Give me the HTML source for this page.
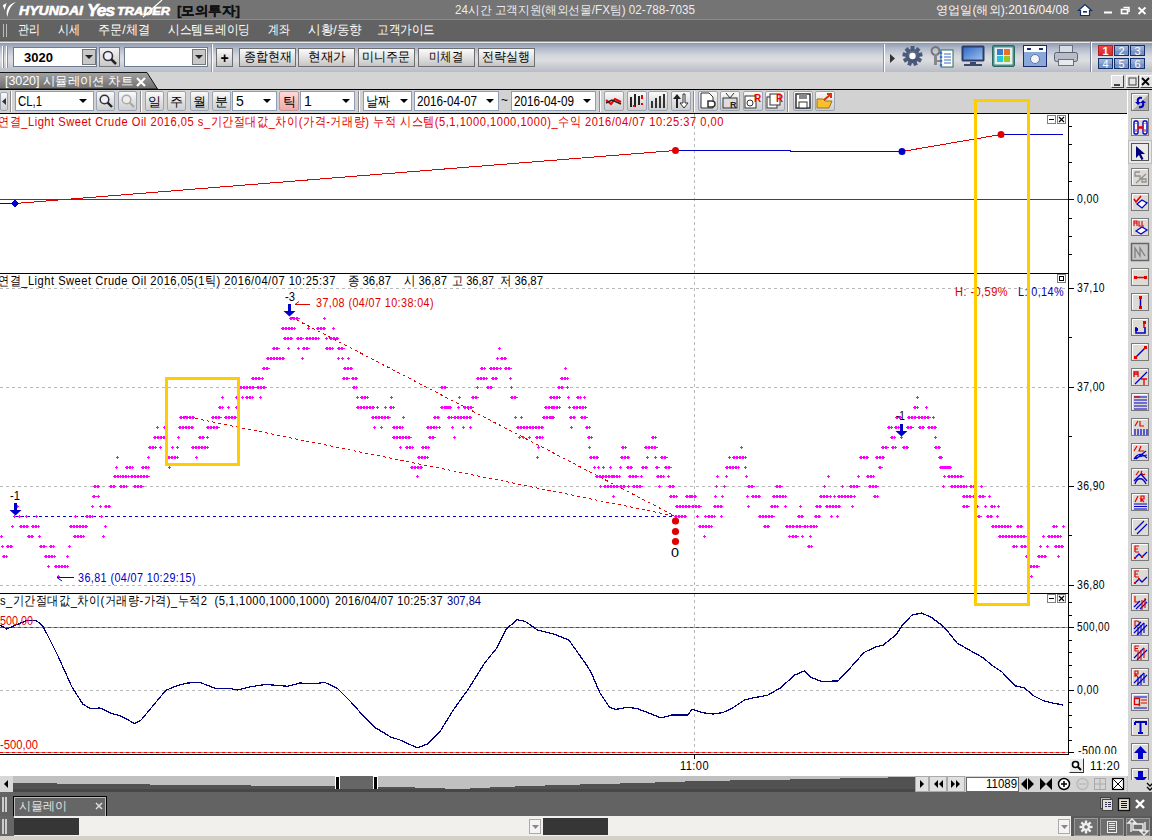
<!DOCTYPE html><html><head><meta charset="utf-8"><style>
*{box-sizing:border-box}
html,body{margin:0;padding:0;width:1152px;height:840px;overflow:hidden;background:#d4d4d4;font-family:"Liberation Sans",sans-serif;font-size:12px}
.ab{position:absolute}
.t{position:absolute;white-space:nowrap;line-height:1}
.f{display:inline-block}
</style></head><body>
<div class="ab" style="left:0;top:0;width:1152px;height:19px;background:#747474"></div>
<div class="ab" style="left:0;top:19px;width:1152px;height:1px;background:#8c8c8c"></div>
<div class="ab" style="left:0;top:20px;width:1152px;height:22px;background:#636262"></div>
<div class="ab" style="left:0;top:40px;width:1152px;height:1px;background:#5a5a5a"></div><div class="ab" style="left:0;top:41px;width:1152px;height:1px;background:#9a9a9a"></div><div class="ab" style="left:0;top:42px;width:1152px;height:1px;background:#e8e8e8"></div>
<div class="ab" style="left:0;top:43px;width:1152px;height:29px;background:linear-gradient(#8c9ab0,#b4bccb 20%,#d6d8de 45%,#dcdde0 60%,#b8bcc7)"></div>
<div class="ab" style="left:0;top:72px;width:1152px;height:17px;background:#d4d4d4"></div>
<div class="ab" style="left:0;top:89px;width:1152px;height:1px;background:#000"></div>
<div class="ab" style="left:0;top:90px;width:1128px;height:23px;background:#d2d2d2"></div>
<div class="ab" style="left:0;top:113px;width:1128px;height:663px;background:#fff"></div>
<div class="ab" style="left:1127px;top:90px;width:1px;height:702px;background:#fff"></div>
<div class="ab" style="left:1128px;top:90px;width:24px;height:702px;background:#d6d6d6"></div>
<div class="ab" style="left:0;top:776px;width:1128px;height:16px;background:#c0c0c0"></div>
<div class="ab" style="left:0;top:792px;width:1152px;height:24px;background:#636363"></div>
<div class="ab" style="left:0;top:816px;width:1152px;height:20px;background:#f2f0ec"></div>
<div class="ab" style="left:0;top:836px;width:1152px;height:4px;background:#d4d0c8"></div>
<svg width='1152' height='840' style='position:absolute;left:0;top:0' shape-rendering='crispEdges'><line x1="0" y1="288.5" x2="1068" y2="288.5" stroke="#b8b8b8" stroke-dasharray="3,3"/><line x1="0" y1="387.5" x2="1068" y2="387.5" stroke="#b8b8b8" stroke-dasharray="3,3"/><line x1="0" y1="486.5" x2="1068" y2="486.5" stroke="#b8b8b8" stroke-dasharray="3,3"/><line x1="0" y1="585.5" x2="1068" y2="585.5" stroke="#b8b8b8" stroke-dasharray="3,3"/><line x1="0" y1="690.5" x2="1068" y2="690.5" stroke="#b8b8b8" stroke-dasharray="3,3"/><line x1="694.5" y1="114" x2="694.5" y2="754" stroke="#b8b8b8" stroke-dasharray="3,3"/><line x1="0" y1="199.5" x2="1068" y2="199.5" stroke="#e00000"/><polyline points="0,203.5 15,203.5" fill="none" stroke="#0000c8" stroke-width="1"/><polyline points="15,203.5 675,150.5" fill="none" stroke="#e00000" stroke-width="1"/><polyline points="675,150.5 790,150.5 790,151.5 902,151.5" fill="none" stroke="#0000c8"/><polyline points="902,151.5 1001,134.5" fill="none" stroke="#e00000"/><polyline points="1001,134.5 1063,134.5" fill="none" stroke="#0000c8"/><polygon points="15,199 19,203.5 15,208 11,203.5" fill="#0000c8"/><circle cx="675.5" cy="150.5" r="3.5" fill="#e00000" shape-rendering="auto"/><circle cx="902" cy="151.5" r="3.5" fill="#0000c8" shape-rendering="auto"/><circle cx="1001" cy="134.5" r="3.5" fill="#e00000" shape-rendering="auto"/><line x1="0" y1="627.5" x2="1068" y2="627.5" stroke="#a89090"/><line x1="0" y1="627.5" x2="1068" y2="627.5" stroke="#ff0000" stroke-dasharray="3,3"/><line x1="0" y1="752.5" x2="1068" y2="752.5" stroke="#a89090"/><line x1="0" y1="752.5" x2="1068" y2="752.5" stroke="#ff0000" stroke-dasharray="3,3"/><line x1="15" y1="516.5" x2="675" y2="516.5" stroke="#0000d0" stroke-dasharray="3,3"/><polyline points="291,317 675,516" fill="none" stroke="#e00000" stroke-dasharray="3,3"/><polyline points="183,416 675,516" fill="none" stroke="#e00000" stroke-dasharray="3,3"/><path d="M116 457h3v1h-3zM117 456h1v3h-1zM147 457h3v1h-3zM148 456h1v3h-1zM167 457h12v1h-12zM168 456h2v3h-2zM171 456h2v3h-2zM174 456h2v3h-2zM177 456h1v3h-1zM195 457h3v1h-3zM196 456h1v3h-1zM417 457h12v1h-12zM418 456h2v3h-2zM421 456h2v3h-2zM424 456h2v3h-2zM427 456h1v3h-1zM536 457h3v1h-3zM537 456h1v3h-1zM589 457h10v1h-10zM590 456h2v3h-2zM593 456h2v3h-2zM596 456h2v3h-2zM620 457h10v1h-10zM621 456h2v3h-2zM624 456h2v3h-2zM627 456h2v3h-2zM646 457h3v1h-3zM647 456h1v3h-1zM654 457h3v1h-3zM655 456h1v3h-1zM660 457h8v1h-8zM661 456h2v3h-2zM664 456h2v3h-2zM728 457h3v1h-3zM729 456h1v3h-1zM732 457h15v1h-15zM733 456h2v3h-2zM736 456h2v3h-2zM739 456h2v3h-2zM742 456h2v3h-2zM745 456h1v3h-1zM859 457h10v1h-10zM860 456h2v3h-2zM863 456h2v3h-2zM866 456h2v3h-2zM875 457h10v1h-10zM876 456h2v3h-2zM879 456h2v3h-2zM882 456h2v3h-2zM938 457h3v1h-3zM939 456h1v3h-1zM939 457h4v1h-4zM940 456h2v3h-2zM115 467h3v1h-3zM116 466h1v3h-1zM125 467h9v1h-9zM126 466h2v3h-2zM129 466h2v3h-2zM132 466h1v3h-1zM141 467h9v1h-9zM142 466h2v3h-2zM145 466h2v3h-2zM148 466h1v3h-1zM168 467h3v1h-3zM169 466h1v3h-1zM410 467h13v1h-13zM411 466h2v3h-2zM414 466h2v3h-2zM417 466h2v3h-2zM420 466h2v3h-2zM593 467h3v1h-3zM594 466h1v3h-1zM597 467h3v1h-3zM598 466h1v3h-1zM602 467h3v1h-3zM603 466h1v3h-1zM609 467h3v1h-3zM610 466h1v3h-1zM619 467h3v1h-3zM620 466h1v3h-1zM626 467h7v1h-7zM627 466h2v3h-2zM630 466h2v3h-2zM641 467h7v1h-7zM642 466h2v3h-2zM645 466h2v3h-2zM655 467h5v1h-5zM656 466h2v3h-2zM664 467h8v1h-8zM665 466h2v3h-2zM668 466h2v3h-2zM725 467h15v1h-15zM726 466h2v3h-2zM729 466h2v3h-2zM732 466h2v3h-2zM735 466h2v3h-2zM738 466h1v3h-1zM744 467h3v1h-3zM745 466h1v3h-1zM878 467h5v1h-5zM879 466h2v3h-2zM939 467h13v1h-13zM940 466h2v3h-2zM943 466h2v3h-2zM946 466h2v3h-2zM949 466h2v3h-2zM940 467h11v1h-11zM941 466h2v3h-2zM944 466h2v3h-2zM947 466h2v3h-2zM113 476h9v1h-9zM114 475h2v3h-2zM117 475h2v3h-2zM120 475h1v3h-1zM121 476h9v1h-9zM122 475h2v3h-2zM125 475h2v3h-2zM128 475h1v3h-1zM130 476h20v1h-20zM131 475h2v3h-2zM134 475h2v3h-2zM137 475h2v3h-2zM140 475h2v3h-2zM143 475h2v3h-2zM146 475h2v3h-2zM416 476h3v1h-3zM417 475h1v3h-1zM595 476h19v1h-19zM596 475h2v3h-2zM599 475h2v3h-2zM602 475h2v3h-2zM605 475h2v3h-2zM608 475h2v3h-2zM611 475h2v3h-2zM612 476h9v1h-9zM613 475h2v3h-2zM616 475h2v3h-2zM619 475h1v3h-1zM628 476h11v1h-11zM629 475h2v3h-2zM632 475h2v3h-2zM635 475h2v3h-2zM640 476h3v1h-3zM641 475h1v3h-1zM656 476h9v1h-9zM657 475h2v3h-2zM660 475h2v3h-2zM663 475h1v3h-1zM667 476h3v1h-3zM668 475h1v3h-1zM716 476h3v1h-3zM717 475h1v3h-1zM725 476h3v1h-3zM726 475h1v3h-1zM745 476h3v1h-3zM746 475h1v3h-1zM827 476h3v1h-3zM828 475h1v3h-1zM857 476h3v1h-3zM858 475h1v3h-1zM866 476h9v1h-9zM867 475h2v3h-2zM870 475h2v3h-2zM873 475h1v3h-1zM943 476h3v1h-3zM944 475h1v3h-1zM948 476h3v1h-3zM949 475h1v3h-1zM947 476h17v1h-17zM948 475h2v3h-2zM951 475h2v3h-2zM954 475h2v3h-2zM957 475h2v3h-2zM960 475h2v3h-2zM93 486h7v1h-7zM94 485h2v3h-2zM97 485h2v3h-2zM109 486h7v1h-7zM110 485h2v3h-2zM113 485h2v3h-2zM119 486h9v1h-9zM120 485h2v3h-2zM123 485h2v3h-2zM126 485h1v3h-1zM133 486h11v1h-11zM134 485h2v3h-2zM137 485h2v3h-2zM140 485h2v3h-2zM599 486h3v1h-3zM600 485h1v3h-1zM603 486h16v1h-16zM604 485h2v3h-2zM607 485h2v3h-2zM610 485h2v3h-2zM613 485h2v3h-2zM616 485h2v3h-2zM619 486h7v1h-7zM620 485h2v3h-2zM623 485h2v3h-2zM627 486h3v1h-3zM628 485h1v3h-1zM632 486h11v1h-11zM633 485h2v3h-2zM636 485h2v3h-2zM639 485h2v3h-2zM658 486h3v1h-3zM659 485h1v3h-1zM668 486h7v1h-7zM669 485h2v3h-2zM672 485h2v3h-2zM715 486h3v1h-3zM716 485h1v3h-1zM723 486h3v1h-3zM724 485h1v3h-1zM747 486h8v1h-8zM748 485h2v3h-2zM751 485h2v3h-2zM775 486h8v1h-8zM776 485h2v3h-2zM779 485h2v3h-2zM823 486h3v1h-3zM824 485h1v3h-1zM841 486h3v1h-3zM842 485h1v3h-1zM849 486h11v1h-11zM850 485h2v3h-2zM853 485h2v3h-2zM856 485h2v3h-2zM868 486h11v1h-11zM869 485h2v3h-2zM872 485h2v3h-2zM875 485h2v3h-2zM942 486h3v1h-3zM943 485h1v3h-1zM950 486h18v1h-18zM951 485h2v3h-2zM954 485h2v3h-2zM957 485h2v3h-2zM960 485h2v3h-2zM963 485h2v3h-2zM966 485h1v3h-1zM969 486h8v1h-8zM970 485h2v3h-2zM973 485h2v3h-2zM980 486h3v1h-3zM981 485h1v3h-1zM92 496h5v1h-5zM93 495h2v3h-2zM97 496h3v1h-3zM98 495h1v3h-1zM612 496h3v1h-3zM613 495h1v3h-1zM669 496h9v1h-9zM670 495h2v3h-2zM673 495h2v3h-2zM676 495h1v3h-1zM685 496h7v1h-7zM686 495h2v3h-2zM689 495h2v3h-2zM690 496h7v1h-7zM691 495h2v3h-2zM694 495h2v3h-2zM714 496h3v1h-3zM715 495h1v3h-1zM721 496h3v1h-3zM722 495h1v3h-1zM746 496h3v1h-3zM747 495h1v3h-1zM751 496h10v1h-10zM752 495h2v3h-2zM755 495h2v3h-2zM758 495h2v3h-2zM772 496h15v1h-15zM773 495h2v3h-2zM776 495h2v3h-2zM779 495h2v3h-2zM782 495h2v3h-2zM785 495h1v3h-1zM819 496h11v1h-11zM820 495h2v3h-2zM823 495h2v3h-2zM826 495h2v3h-2zM829 496h3v1h-3zM830 495h1v3h-1zM833 496h3v1h-3zM834 495h1v3h-1zM837 496h16v1h-16zM838 495h2v3h-2zM841 495h2v3h-2zM844 495h2v3h-2zM847 495h2v3h-2zM850 495h2v3h-2zM853 496h3v1h-3zM854 495h1v3h-1zM873 496h6v1h-6zM874 495h2v3h-2zM877 495h1v3h-1zM962 496h10v1h-10zM963 495h2v3h-2zM966 495h2v3h-2zM969 495h2v3h-2zM972 496h3v1h-3zM973 495h1v3h-1zM978 496h8v1h-8zM979 495h2v3h-2zM982 495h2v3h-2zM988 496h3v1h-3zM989 495h1v3h-1zM91 506h3v1h-3zM92 505h1v3h-1zM99 506h3v1h-3zM100 505h1v3h-1zM104 506h7v1h-7zM105 505h2v3h-2zM108 505h2v3h-2zM16 506h3v1h-3zM17 505h1v3h-1zM675 506h17v1h-17zM676 505h2v3h-2zM679 505h2v3h-2zM682 505h2v3h-2zM685 505h2v3h-2zM688 505h2v3h-2zM691 506h11v1h-11zM692 505h2v3h-2zM695 505h2v3h-2zM698 505h2v3h-2zM713 506h10v1h-10zM714 505h2v3h-2zM717 505h2v3h-2zM720 505h2v3h-2zM747 506h3v1h-3zM748 505h1v3h-1zM770 506h9v1h-9zM771 505h2v3h-2zM774 505h2v3h-2zM777 505h1v3h-1zM784 506h3v1h-3zM785 505h1v3h-1zM799 506h3v1h-3zM800 505h1v3h-1zM815 506h7v1h-7zM816 505h2v3h-2zM819 505h2v3h-2zM825 506h16v1h-16zM826 505h2v3h-2zM829 505h2v3h-2zM832 505h2v3h-2zM835 505h2v3h-2zM838 505h2v3h-2zM851 506h3v1h-3zM852 505h1v3h-1zM962 506h8v1h-8zM963 505h2v3h-2zM966 505h2v3h-2zM976 506h3v1h-3zM977 505h1v3h-1zM984 506h3v1h-3zM985 505h1v3h-1zM990 506h6v1h-6zM991 505h2v3h-2zM994 505h1v3h-1zM997 506h3v1h-3zM998 505h1v3h-1zM13 516h3v1h-3zM14 515h1v3h-1zM18 516h3v1h-3zM19 515h1v3h-1zM25 516h3v1h-3zM26 515h1v3h-1zM35 516h3v1h-3zM36 515h1v3h-1zM74 516h3v1h-3zM75 515h1v3h-1zM85 516h9v1h-9zM86 515h2v3h-2zM89 515h2v3h-2zM92 515h1v3h-1zM100 516h3v1h-3zM101 515h1v3h-1zM674 516h13v1h-13zM675 515h2v3h-2zM678 515h2v3h-2zM681 515h2v3h-2zM684 515h2v3h-2zM696 516h3v1h-3zM697 515h1v3h-1zM704 516h3v1h-3zM705 515h1v3h-1zM707 516h9v1h-9zM708 515h2v3h-2zM711 515h2v3h-2zM714 515h1v3h-1zM720 516h3v1h-3zM721 515h1v3h-1zM758 516h17v1h-17zM759 515h2v3h-2zM762 515h2v3h-2zM765 515h2v3h-2zM768 515h2v3h-2zM771 515h2v3h-2zM797 516h7v1h-7zM798 515h2v3h-2zM801 515h2v3h-2zM814 516h7v1h-7zM815 515h2v3h-2zM818 515h2v3h-2zM830 516h3v1h-3zM831 515h1v3h-1zM836 516h3v1h-3zM837 515h1v3h-1zM977 516h5v1h-5zM978 515h2v3h-2zM986 516h7v1h-7zM987 515h2v3h-2zM990 515h2v3h-2zM996 516h3v1h-3zM997 515h1v3h-1zM11 526h3v1h-3zM12 525h1v3h-1zM19 526h10v1h-10zM20 525h2v3h-2zM23 525h2v3h-2zM26 525h2v3h-2zM31 526h9v1h-9zM32 525h2v3h-2zM35 525h2v3h-2zM38 525h1v3h-1zM69 526h19v1h-19zM70 525h2v3h-2zM73 525h2v3h-2zM76 525h2v3h-2zM79 525h2v3h-2zM82 525h2v3h-2zM85 525h2v3h-2zM104 526h3v1h-3zM105 525h1v3h-1zM698 526h15v1h-15zM699 525h2v3h-2zM702 525h2v3h-2zM705 525h2v3h-2zM708 525h2v3h-2zM711 525h1v3h-1zM763 526h7v1h-7zM764 525h2v3h-2zM767 525h2v3h-2zM785 526h11v1h-11zM786 525h2v3h-2zM789 525h2v3h-2zM792 525h2v3h-2zM795 526h8v1h-8zM796 525h2v3h-2zM799 525h2v3h-2zM803 526h6v1h-6zM804 525h2v3h-2zM807 525h1v3h-1zM809 526h9v1h-9zM810 525h2v3h-2zM813 525h2v3h-2zM816 525h1v3h-1zM991 526h21v1h-21zM992 525h2v3h-2zM995 525h2v3h-2zM998 525h2v3h-2zM1001 525h2v3h-2zM1004 525h2v3h-2zM1007 525h2v3h-2zM1010 525h1v3h-1zM1016 526h7v1h-7zM1017 525h2v3h-2zM1020 525h2v3h-2zM1052 526h6v1h-6zM1053 525h2v3h-2zM1056 525h1v3h-1zM1062 526h3v1h-3zM1063 525h1v3h-1zM0 536h3v1h-3zM1 535h1v3h-1zM27 536h7v1h-7zM28 535h2v3h-2zM31 535h2v3h-2zM38 536h3v1h-3zM39 535h1v3h-1zM73 536h12v1h-12zM74 535h2v3h-2zM77 535h2v3h-2zM80 535h2v3h-2zM83 535h1v3h-1zM102 536h3v1h-3zM103 535h1v3h-1zM703 536h3v1h-3zM704 535h1v3h-1zM788 536h3v1h-3zM789 535h1v3h-1zM791 536h8v1h-8zM792 535h2v3h-2zM795 535h2v3h-2zM801 536h3v1h-3zM802 535h1v3h-1zM809 536h3v1h-3zM810 535h1v3h-1zM998 536h29v1h-29zM999 535h2v3h-2zM1002 535h2v3h-2zM1005 535h2v3h-2zM1008 535h2v3h-2zM1011 535h2v3h-2zM1014 535h2v3h-2zM1017 535h2v3h-2zM1020 535h2v3h-2zM1023 535h2v3h-2zM1042 536h3v1h-3zM1043 535h1v3h-1zM1047 536h13v1h-13zM1048 535h2v3h-2zM1051 535h2v3h-2zM1054 535h2v3h-2zM1057 535h2v3h-2zM1059 536h3v1h-3zM1060 535h1v3h-1zM1 546h3v1h-3zM2 545h1v3h-1zM6 546h7v1h-7zM7 545h2v3h-2zM10 545h2v3h-2zM39 546h8v1h-8zM40 545h2v3h-2zM43 545h2v3h-2zM49 546h6v1h-6zM50 545h2v3h-2zM53 545h1v3h-1zM68 546h3v1h-3zM69 545h1v3h-1zM807 546h6v1h-6zM808 545h2v3h-2zM811 545h1v3h-1zM1012 546h6v1h-6zM1013 545h2v3h-2zM1016 545h1v3h-1zM1020 546h8v1h-8zM1021 545h2v3h-2zM1024 545h2v3h-2zM1039 546h3v1h-3zM1040 545h1v3h-1zM1046 546h3v1h-3zM1047 545h1v3h-1zM1054 546h10v1h-10zM1055 545h2v3h-2zM1058 545h2v3h-2zM1061 545h2v3h-2zM2 556h6v1h-6zM3 555h2v3h-2zM6 555h1v3h-1zM44 556h12v1h-12zM45 555h2v3h-2zM48 555h2v3h-2zM51 555h2v3h-2zM54 555h1v3h-1zM66 556h3v1h-3zM67 555h1v3h-1zM1025 556h3v1h-3zM1026 555h1v3h-1zM1037 556h10v1h-10zM1038 555h2v3h-2zM1041 555h2v3h-2zM1044 555h2v3h-2zM1057 556h3v1h-3zM1058 555h1v3h-1zM47 566h3v1h-3zM48 565h1v3h-1zM54 566h15v1h-15zM55 565h2v3h-2zM58 565h2v3h-2zM61 565h2v3h-2zM64 565h2v3h-2zM67 565h1v3h-1zM1029 566h11v1h-11zM1030 565h2v3h-2zM1033 565h2v3h-2zM1036 565h2v3h-2zM57 576h3v1h-3zM58 575h1v3h-1zM1030 576h3v1h-3zM1031 575h1v3h-1zM148 447h9v1h-9zM149 446h2v3h-2zM152 446h2v3h-2zM155 446h1v3h-1zM159 447h3v1h-3zM160 446h1v3h-1zM171 447h3v1h-3zM172 446h1v3h-1zM176 447h3v1h-3zM177 446h1v3h-1zM191 447h18v1h-18zM192 446h2v3h-2zM195 446h2v3h-2zM198 446h2v3h-2zM201 446h2v3h-2zM204 446h2v3h-2zM207 446h1v3h-1zM399 447h3v1h-3zM400 446h1v3h-1zM405 447h9v1h-9zM406 446h2v3h-2zM409 446h2v3h-2zM412 446h1v3h-1zM421 447h9v1h-9zM422 446h2v3h-2zM425 446h2v3h-2zM428 446h1v3h-1zM537 447h3v1h-3zM538 446h1v3h-1zM588 447h3v1h-3zM589 446h1v3h-1zM621 447h6v1h-6zM622 446h2v3h-2zM625 446h1v3h-1zM644 447h14v1h-14zM645 446h2v3h-2zM648 446h2v3h-2zM651 446h2v3h-2zM654 446h2v3h-2zM740 447h3v1h-3zM741 446h1v3h-1zM881 447h8v1h-8zM882 446h2v3h-2zM885 446h2v3h-2zM891 447h6v1h-6zM892 446h2v3h-2zM895 446h1v3h-1zM902 447h7v1h-7zM903 446h2v3h-2zM906 446h2v3h-2zM934 447h7v1h-7zM935 446h2v3h-2zM938 446h2v3h-2zM153 437h13v1h-13zM154 436h2v3h-2zM157 436h2v3h-2zM160 436h2v3h-2zM163 436h2v3h-2zM177 437h3v1h-3zM178 436h1v3h-1zM198 437h7v1h-7zM199 436h2v3h-2zM202 436h2v3h-2zM206 437h3v1h-3zM207 436h1v3h-1zM392 437h20v1h-20zM393 436h2v3h-2zM396 436h2v3h-2zM399 436h2v3h-2zM402 436h2v3h-2zM405 436h2v3h-2zM408 436h2v3h-2zM428 437h8v1h-8zM429 436h2v3h-2zM432 436h2v3h-2zM453 437h3v1h-3zM454 436h1v3h-1zM518 437h3v1h-3zM519 436h1v3h-1zM522 437h3v1h-3zM523 436h1v3h-1zM528 437h3v1h-3zM529 436h1v3h-1zM535 437h9v1h-9zM536 436h2v3h-2zM539 436h2v3h-2zM542 436h1v3h-1zM587 437h6v1h-6zM588 436h2v3h-2zM591 436h1v3h-1zM651 437h6v1h-6zM652 436h2v3h-2zM655 436h1v3h-1zM890 437h6v1h-6zM891 436h2v3h-2zM894 436h1v3h-1zM900 437h3v1h-3zM901 436h1v3h-1zM934 437h3v1h-3zM935 436h1v3h-1zM156 427h3v1h-3zM157 426h1v3h-1zM163 427h3v1h-3zM164 426h1v3h-1zM178 427h16v1h-16zM179 426h2v3h-2zM182 426h2v3h-2zM185 426h2v3h-2zM188 426h2v3h-2zM191 426h2v3h-2zM206 427h14v1h-14zM207 426h2v3h-2zM210 426h2v3h-2zM213 426h2v3h-2zM216 426h2v3h-2zM373 427h3v1h-3zM374 426h1v3h-1zM380 427h3v1h-3zM381 426h1v3h-1zM392 427h12v1h-12zM393 426h2v3h-2zM396 426h2v3h-2zM399 426h2v3h-2zM402 426h1v3h-1zM426 427h12v1h-12zM427 426h2v3h-2zM430 426h2v3h-2zM433 426h2v3h-2zM436 426h1v3h-1zM438 427h3v1h-3zM439 426h1v3h-1zM451 427h3v1h-3zM452 426h1v3h-1zM462 427h3v1h-3zM463 426h1v3h-1zM469 427h3v1h-3zM470 426h1v3h-1zM516 427h28v1h-28zM517 426h2v3h-2zM520 426h2v3h-2zM523 426h2v3h-2zM526 426h2v3h-2zM529 426h2v3h-2zM532 426h2v3h-2zM535 426h2v3h-2zM538 426h2v3h-2zM541 426h2v3h-2zM570 427h3v1h-3zM571 426h1v3h-1zM585 427h6v1h-6zM586 426h2v3h-2zM589 426h1v3h-1zM887 427h6v1h-6zM888 426h2v3h-2zM891 426h1v3h-1zM894 427h6v1h-6zM895 426h2v3h-2zM898 426h1v3h-1zM906 427h8v1h-8zM907 426h2v3h-2zM910 426h2v3h-2zM918 427h7v1h-7zM919 426h2v3h-2zM922 426h2v3h-2zM927 427h10v1h-10zM928 426h2v3h-2zM931 426h2v3h-2zM934 426h2v3h-2zM179 417h16v1h-16zM180 416h2v3h-2zM183 416h2v3h-2zM186 416h2v3h-2zM189 416h2v3h-2zM192 416h2v3h-2zM211 417h11v1h-11zM212 416h2v3h-2zM215 416h2v3h-2zM218 416h2v3h-2zM224 417h14v1h-14zM225 416h2v3h-2zM228 416h2v3h-2zM231 416h2v3h-2zM234 416h2v3h-2zM371 417h20v1h-20zM372 416h2v3h-2zM375 416h2v3h-2zM378 416h2v3h-2zM381 416h2v3h-2zM384 416h2v3h-2zM387 416h2v3h-2zM402 417h3v1h-3zM403 416h1v3h-1zM433 417h7v1h-7zM434 416h2v3h-2zM437 416h2v3h-2zM448 417h3v1h-3zM449 416h1v3h-1zM447 417h6v1h-6zM448 416h2v3h-2zM451 416h1v3h-1zM453 417h19v1h-19zM454 416h2v3h-2zM457 416h2v3h-2zM460 416h2v3h-2zM463 416h2v3h-2zM466 416h2v3h-2zM469 416h2v3h-2zM514 417h3v1h-3zM515 416h1v3h-1zM520 417h3v1h-3zM521 416h1v3h-1zM542 417h13v1h-13zM543 416h2v3h-2zM546 416h2v3h-2zM549 416h2v3h-2zM552 416h2v3h-2zM550 417h3v1h-3zM551 416h1v3h-1zM569 417h7v1h-7zM570 416h2v3h-2zM573 416h2v3h-2zM580 417h8v1h-8zM581 416h2v3h-2zM584 416h2v3h-2zM895 417h7v1h-7zM896 416h2v3h-2zM899 416h2v3h-2zM907 417h10v1h-10zM908 416h2v3h-2zM911 416h2v3h-2zM914 416h2v3h-2zM917 417h14v1h-14zM918 416h2v3h-2zM921 416h2v3h-2zM924 416h2v3h-2zM927 416h2v3h-2zM932 417h3v1h-3zM933 416h1v3h-1zM218 407h6v1h-6zM219 406h2v3h-2zM222 406h1v3h-1zM227 407h3v1h-3zM228 406h1v3h-1zM235 407h3v1h-3zM236 406h1v3h-1zM356 407h19v1h-19zM357 406h2v3h-2zM360 406h2v3h-2zM363 406h2v3h-2zM366 406h2v3h-2zM369 406h2v3h-2zM372 406h2v3h-2zM376 407h3v1h-3zM377 406h1v3h-1zM384 407h3v1h-3zM385 406h1v3h-1zM389 407h6v1h-6zM390 406h2v3h-2zM393 406h1v3h-1zM440 407h12v1h-12zM441 406h2v3h-2zM444 406h2v3h-2zM447 406h2v3h-2zM450 406h1v3h-1zM444 407h8v1h-8zM445 406h2v3h-2zM448 406h2v3h-2zM457 407h3v1h-3zM458 406h1v3h-1zM463 407h11v1h-11zM464 406h2v3h-2zM467 406h2v3h-2zM470 406h2v3h-2zM544 407h12v1h-12zM545 406h2v3h-2zM548 406h2v3h-2zM551 406h2v3h-2zM554 406h1v3h-1zM552 407h9v1h-9zM553 406h2v3h-2zM556 406h2v3h-2zM559 406h1v3h-1zM568 407h3v1h-3zM569 406h1v3h-1zM572 407h15v1h-15zM573 406h2v3h-2zM576 406h2v3h-2zM579 406h2v3h-2zM582 406h2v3h-2zM585 406h1v3h-1zM913 407h6v1h-6zM914 406h2v3h-2zM917 406h1v3h-1zM925 407h3v1h-3zM926 406h1v3h-1zM221 397h3v1h-3zM222 396h1v3h-1zM235 397h3v1h-3zM236 396h1v3h-1zM241 397h3v1h-3zM242 396h1v3h-1zM245 397h9v1h-9zM246 396h2v3h-2zM249 396h2v3h-2zM252 396h1v3h-1zM259 397h3v1h-3zM260 396h1v3h-1zM356 397h3v1h-3zM357 396h1v3h-1zM360 397h9v1h-9zM361 396h2v3h-2zM364 396h2v3h-2zM367 396h1v3h-1zM390 397h3v1h-3zM391 396h1v3h-1zM458 397h3v1h-3zM459 396h1v3h-1zM471 397h8v1h-8zM472 396h2v3h-2zM475 396h2v3h-2zM510 397h8v1h-8zM511 396h2v3h-2zM514 396h2v3h-2zM549 397h12v1h-12zM550 396h2v3h-2zM553 396h2v3h-2zM556 396h2v3h-2zM559 396h1v3h-1zM567 397h3v1h-3zM568 396h1v3h-1zM576 397h6v1h-6zM577 396h2v3h-2zM580 396h1v3h-1zM583 397h3v1h-3zM584 396h1v3h-1zM916 397h3v1h-3zM917 396h1v3h-1zM239 387h10v1h-10zM240 386h2v3h-2zM243 386h2v3h-2zM246 386h2v3h-2zM248 387h8v1h-8zM249 386h2v3h-2zM252 386h2v3h-2zM256 387h11v1h-11zM257 386h2v3h-2zM260 386h2v3h-2zM263 386h2v3h-2zM352 387h6v1h-6zM353 386h2v3h-2zM356 386h1v3h-1zM440 387h8v1h-8zM441 386h2v3h-2zM444 386h2v3h-2zM476 387h3v1h-3zM477 386h1v3h-1zM486 387h7v1h-7zM487 386h2v3h-2zM490 386h2v3h-2zM510 387h3v1h-3zM511 386h1v3h-1zM557 387h7v1h-7zM558 386h2v3h-2zM561 386h2v3h-2zM566 387h3v1h-3zM567 386h1v3h-1zM251 378h10v1h-10zM252 377h2v3h-2zM255 377h2v3h-2zM258 377h2v3h-2zM261 378h3v1h-3zM262 377h1v3h-1zM342 378h8v1h-8zM343 377h2v3h-2zM346 377h2v3h-2zM351 378h7v1h-7zM352 377h2v3h-2zM355 377h2v3h-2zM476 378h12v1h-12zM477 377h2v3h-2zM480 377h2v3h-2zM483 377h2v3h-2zM486 377h1v3h-1zM491 378h7v1h-7zM492 377h2v3h-2zM495 377h2v3h-2zM509 378h3v1h-3zM510 377h1v3h-1zM560 378h9v1h-9zM561 377h2v3h-2zM564 377h2v3h-2zM567 377h1v3h-1zM262 368h8v1h-8zM263 367h2v3h-2zM266 367h2v3h-2zM343 368h10v1h-10zM344 367h2v3h-2zM347 367h2v3h-2zM350 367h2v3h-2zM480 368h6v1h-6zM481 367h2v3h-2zM484 367h1v3h-1zM489 368h10v1h-10zM490 367h2v3h-2zM493 367h2v3h-2zM496 367h2v3h-2zM499 368h3v1h-3zM500 367h1v3h-1zM504 368h8v1h-8zM505 367h2v3h-2zM508 367h2v3h-2zM564 368h3v1h-3zM565 367h1v3h-1zM266 358h11v1h-11zM267 357h2v3h-2zM270 357h2v3h-2zM273 357h2v3h-2zM275 358h10v1h-10zM276 357h2v3h-2zM279 357h2v3h-2zM282 357h2v3h-2zM301 358h3v1h-3zM302 357h1v3h-1zM337 358h3v1h-3zM338 357h1v3h-1zM341 358h3v1h-3zM342 357h1v3h-1zM347 358h3v1h-3zM348 357h1v3h-1zM496 358h3v1h-3zM497 357h1v3h-1zM500 358h7v1h-7zM501 357h2v3h-2zM504 357h2v3h-2zM272 348h8v1h-8zM273 347h2v3h-2zM276 347h2v3h-2zM287 348h3v1h-3zM288 347h1v3h-1zM297 348h3v1h-3zM298 347h1v3h-1zM302 348h8v1h-8zM303 347h2v3h-2zM306 347h2v3h-2zM325 348h9v1h-9zM326 347h2v3h-2zM329 347h2v3h-2zM332 347h1v3h-1zM337 348h8v1h-8zM338 347h2v3h-2zM341 347h2v3h-2zM498 348h3v1h-3zM499 347h1v3h-1zM283 338h10v1h-10zM284 337h2v3h-2zM287 337h2v3h-2zM290 337h2v3h-2zM296 338h8v1h-8zM297 337h2v3h-2zM300 337h2v3h-2zM305 338h15v1h-15zM306 337h2v3h-2zM309 337h2v3h-2zM312 337h2v3h-2zM315 337h2v3h-2zM318 337h1v3h-1zM325 338h3v1h-3zM326 337h1v3h-1zM329 338h10v1h-10zM330 337h2v3h-2zM333 337h2v3h-2zM336 337h2v3h-2zM281 328h7v1h-7zM282 327h2v3h-2zM285 327h2v3h-2zM287 328h9v1h-9zM288 327h2v3h-2zM291 327h2v3h-2zM294 327h1v3h-1zM307 328h3v1h-3zM308 327h1v3h-1zM316 328h10v1h-10zM317 327h2v3h-2zM320 327h2v3h-2zM323 327h2v3h-2zM332 328h3v1h-3zM333 327h1v3h-1zM289 318h11v1h-11zM290 317h2v3h-2zM293 317h2v3h-2zM296 317h2v3h-2zM323 318h3v1h-3zM324 317h1v3h-1z" fill="#ff00ff"/><circle cx="675.5" cy="521" r="3.6" fill="#e00000" shape-rendering="auto"/><circle cx="675.5" cy="531.5" r="3.6" fill="#e00000" shape-rendering="auto"/><circle cx="675.5" cy="541.5" r="3.6" fill="#e00000" shape-rendering="auto"/><path d="M14.0 503h3v7h4.5l-6 5.5l-6-5.5h4.5z" fill="#0000c8" shape-rendering="auto"/><path d="M288.0 304h3v7h4.5l-6 5.5l-6-5.5h4.5z" fill="#0000c8" shape-rendering="auto"/><path d="M900.0 424h3v7h4.5l-6 5.5l-6-5.5h4.5z" fill="#0000c8" shape-rendering="auto"/><polyline points="0,625.3 6.9,629 15.6,625 26.6,620.6 35.9,620.3 42.2,625.3 46.9,633.8 57.8,655.6 71.9,686.9 82.8,704 90.6,708.8 100,708 109.4,712.5 121.9,716.6 134.4,723.4 140.6,720.6 153.1,705.6 165.6,690.6 175,686.3 187.5,683 200,682.5 215.6,688.4 231.3,688.8 237.5,690 250,686.9 265.6,684.4 287.5,686.3 300,683 312.5,683.8 325,682.5 337.5,688.4 350,701 362.5,715 375,727.5 390.6,736.9 400,740 417.2,747.8 428.1,743.8 440.6,730.6 453.1,710.3 468.8,688.4 484.4,663.4 496.9,647.8 506.3,629 517.2,619.7 525,621.3 537.5,630 553.1,633.8 568.8,640 584.4,661.9 590.6,671.3 600,693 609.4,707.2 615.6,709.4 628.1,707.2 637.5,708.8 650,713.4 661,718 671.9,715 687.5,715 692.2,709.4 703.1,712.8 712.8,714 722.5,712.7 732.1,708.2 745,699.8 754.6,697.6 767.4,695.3 780.3,688 794.7,675.1 804.4,670.9 810.8,677.4 822,681.5 838.1,680.9 851,667.1 863.8,652.6 875,647.2 883.1,645.2 895.9,635 902.3,625.3 912,615 921.6,613.1 931.3,617.3 944.1,627 957,643 969.8,650.4 982.6,657.4 992.3,665.5 1001.9,671.9 1014.8,685.7 1024.4,688 1034,696 1043.7,700.8 1053.3,703.1 1062.9,705" fill="none" stroke="#00007f" stroke-width="1.25" stroke-linejoin="round"/><rect x="0" y="113" width="1127" height="1" fill="#000"/><rect x="0" y="273" width="1068" height="1" fill="#000"/><rect x="0" y="593" width="1068" height="1" fill="#000"/><rect x="0" y="754" width="1068" height="1" fill="#000"/><rect x="1068" y="113" width="1" height="642" fill="#000"/><rect x="1069" y="126" width="3" height="1" fill="#000"/><rect x="1069" y="144" width="3" height="1" fill="#000"/><rect x="1069" y="162" width="3" height="1" fill="#000"/><rect x="1069" y="181" width="3" height="1" fill="#000"/><rect x="1069" y="218" width="3" height="1" fill="#000"/><rect x="1069" y="236" width="3" height="1" fill="#000"/><rect x="1069" y="254" width="3" height="1" fill="#000"/><rect x="1069" y="199" width="5" height="1" fill="#000"/><rect x="1069" y="288" width="5" height="1" fill="#000"/><rect x="1069" y="387" width="5" height="1" fill="#000"/><rect x="1069" y="486" width="5" height="1" fill="#000"/><rect x="1069" y="585" width="5" height="1" fill="#000"/><rect x="1069" y="337" width="3" height="1" fill="#000"/><rect x="1069" y="436" width="3" height="1" fill="#000"/><rect x="1069" y="535" width="3" height="1" fill="#000"/><rect x="1069" y="602" width="3" height="1" fill="#000"/><rect x="1069" y="615" width="3" height="1" fill="#000"/><rect x="1069" y="627" width="5" height="1" fill="#000"/><rect x="1069" y="640" width="3" height="1" fill="#000"/><rect x="1069" y="652" width="3" height="1" fill="#000"/><rect x="1069" y="665" width="3" height="1" fill="#000"/><rect x="1069" y="677" width="3" height="1" fill="#000"/><rect x="1069" y="690" width="5" height="1" fill="#000"/><rect x="1069" y="702" width="3" height="1" fill="#000"/><rect x="1069" y="715" width="3" height="1" fill="#000"/><rect x="1069" y="727" width="3" height="1" fill="#000"/><rect x="1069" y="740" width="3" height="1" fill="#000"/><rect x="1069" y="752" width="5" height="1" fill="#000"/></svg>
<svg class="ab" style="left:0;top:0" width="180" height="19"><path d="M7.5 17 C5 11 8 4 16 2 C11.5 5 8.5 9.5 7.5 17z" fill="#fff"/><path d="M2.8 5.2 L6.6 3 L4.6 10z" fill="#fff"/><path d="M143 17 L162 0" stroke="#fff" stroke-width="1.2"/></svg><div class="t f" style="left:19px;top:4px;font-size:13px;color:#fff;--w:64px;font-weight:bold;font-style:italic;-webkit-text-stroke:0.6px #fff">HYUNDAI</div><div class="t f" style="left:87px;top:3px;font-size:16px;color:#fff;--w:27px;font-weight:bold;font-style:italic;letter-spacing:-1px;-webkit-text-stroke:0.6px #fff">Yes</div><div class="t f" style="left:117px;top:6px;font-size:11px;color:#fff;--w:53px;font-weight:bold;font-style:italic;-webkit-text-stroke:0.6px #fff">TRADER</div><div class="t f" style="left:177px;top:4px;font-size:13px;color:#111;--w:63px;font-weight:bold;-webkit-text-stroke:0.3px #111">[모의투자]</div><div class="t f" style="left:455px;top:4px;font-size:12px;color:#ececec;--w:240px;">24시간 고객지원(해외선물/FX팀) 02-788-7035</div><div class="t f" style="left:936px;top:4px;font-size:12px;color:#f4f4f4;--w:133px;">영업일(해외):2016/04/08</div><svg class="ab" style="left:1066px;top:0px" width="86" height="19"><path d="M12.5 10.5 L19 4.5 L25.5 10.5 L23.5 10.5 L23.5 15.5 L14.5 15.5 L14.5 10.5z" fill="#fff" stroke="#10306a" stroke-width="1.2" stroke-linejoin="miter"/><rect x="17" y="11" width="4" height="1.6" fill="#10306a"/><rect x="38" y="11.5" width="8" height="2" fill="#fff"/><rect x="55.5" y="9.5" width="6" height="4" fill="none" stroke="#fff" stroke-width="1.6"/><path d="M57.5 7.5h5.5v4.5" fill="none" stroke="#fff" stroke-width="1.5"/><path d="M72.5 7.5 L79.5 14 M79.5 7.5 L72.5 14" stroke="#fff" stroke-width="1.8"/></svg><div class="ab" style="left:3px;top:24px;width:1px;height:13px;background:#bbb"></div><div class="ab" style="left:6px;top:24px;width:1px;height:13px;background:#bbb"></div><div class="t f" style="left:18px;top:23px;font-size:13px;color:#fff;--w:22px;">관리</div><div class="t f" style="left:58px;top:23px;font-size:13px;color:#fff;--w:22px;">시세</div><div class="t f" style="left:98px;top:23px;font-size:13px;color:#fff;--w:52px;">주문/체결</div><div class="t f" style="left:168px;top:23px;font-size:13px;color:#fff;--w:82px;">시스템트레이딩</div><div class="t f" style="left:268px;top:23px;font-size:13px;color:#fff;--w:22px;">계좌</div><div class="t f" style="left:308px;top:23px;font-size:13px;color:#fff;--w:54px;">시황/동향</div><div class="t f" style="left:377px;top:23px;font-size:13px;color:#fff;--w:58px;">고객가이드</div><div class="ab" style="left:2px;top:46px;width:2px;height:22px;background:#fff;border-right:1px solid #8090a8"></div><div class="ab" style="left:6px;top:46px;width:2px;height:22px;background:#fff;border-right:1px solid #8090a8"></div><div class="ab" style="left:13px;top:47px;width:84px;height:20px;background:#fff;border:1px solid #6b7b93"></div><div class="t" style="left:24px;top:51px;font-size:13px;font-weight:bold;color:#000">3020</div><div class="ab" style="left:82px;top:49px;width:14px;height:16px;background:#c8c8c8;border:1px solid #777"></div><svg class="ab" style="left:84px;top:54px" width="10" height="6"><path d="M1 1h8l-4 4z" fill="#222"/></svg><div class="ab" style="left:99px;top:47px;width:21px;height:20px;background:linear-gradient(#f4f4f4,#c8c8c8);border:1px solid #7a7a7a"></div><svg class="ab" style="left:101px;top:49px" width="17" height="17"><circle cx="7" cy="7" r="4.5" fill="#eef" stroke="#333" stroke-width="1.6"/><path d="M10 10 L15 15" stroke="#222" stroke-width="2.5"/></svg><div class="ab" style="left:124px;top:47px;width:84px;height:20px;background:#fff;border:1px solid #6b7b93"></div><div class="ab" style="left:192px;top:49px;width:14px;height:16px;background:#c8c8c8;border:1px solid #777"></div><svg class="ab" style="left:194px;top:54px" width="10" height="6"><path d="M1 1h8l-4 4z" fill="#222"/></svg><div class="ab" style="left:211px;top:44px;width:1px;height:28px;background:#fff;border-left:1px solid #8a94a8;width:2px"></div><div class="ab" style="left:216px;top:48px;width:17px;height:19px;background:linear-gradient(#fbfbfb,#dcdcdc 60%,#c4c4c4);border:1px solid #6e6e6e;"></div><div class="t" style="left:216px;top:51px;width:17px;text-align:center;font-size:12px;color:#000"><b style="font-size:14px">+</b></div><div class="ab" style="left:239px;top:48px;width:57px;height:19px;background:linear-gradient(#fbfbfb,#dcdcdc 60%,#c4c4c4);border:1px solid #6e6e6e;"></div><div class="t" style="left:239px;top:51px;width:57px;text-align:center;font-size:12px;color:#000"></div><div class="t f" style="left:244px;top:50px;font-size:13px;color:#000;--w:48px;">종합현재</div><div class="ab" style="left:298px;top:48px;width:57px;height:19px;background:linear-gradient(#fbfbfb,#dcdcdc 60%,#c4c4c4);border:1px solid #6e6e6e;"></div><div class="t" style="left:298px;top:51px;width:57px;text-align:center;font-size:12px;color:#000"></div><div class="t f" style="left:308px;top:50px;font-size:13px;color:#000;--w:38px;">현재가</div><div class="ab" style="left:358px;top:48px;width:57px;height:19px;background:linear-gradient(#fbfbfb,#dcdcdc 60%,#c4c4c4);border:1px solid #6e6e6e;"></div><div class="t" style="left:358px;top:51px;width:57px;text-align:center;font-size:12px;color:#000"></div><div class="t f" style="left:362px;top:50px;font-size:13px;color:#000;--w:48px;">미니주문</div><div class="ab" style="left:418px;top:48px;width:57px;height:19px;background:linear-gradient(#fbfbfb,#dcdcdc 60%,#c4c4c4);border:1px solid #6e6e6e;"></div><div class="t" style="left:418px;top:51px;width:57px;text-align:center;font-size:12px;color:#000"></div><div class="t f" style="left:429px;top:50px;font-size:13px;color:#000;--w:34px;">미체결</div><div class="ab" style="left:478px;top:48px;width:57px;height:19px;background:linear-gradient(#fbfbfb,#dcdcdc 60%,#c4c4c4);border:1px solid #6e6e6e;"></div><div class="t" style="left:478px;top:51px;width:57px;text-align:center;font-size:12px;color:#000"></div><div class="t f" style="left:482px;top:50px;font-size:13px;color:#000;--w:48px;">전략실행</div><div class="ab" style="left:883px;top:44px;width:2px;height:28px;background:#fff;border-left:1px solid #8a94a8"></div><svg class="ab" style="left:880px;top:40px" width="210" height="32"><path d="M10 14 L15 18.5 L10 23z" fill="#333"/><defs><linearGradient id="scr" x1="0" y1="0" x2="1" y2="1"><stop offset="0" stop-color="#3268c8"/><stop offset="1" stop-color="#9cc0ec"/></linearGradient><linearGradient id="gr" x1="0" y1="0" x2="0" y2="1"><stop offset="0" stop-color="#6a7a98"/><stop offset="1" stop-color="#3a4a68"/></linearGradient></defs><g transform="translate(32.5,16)"><circle r="7.2" fill="url(#gr)"/><rect x="-2" y="-10" width="4" height="5" fill="#4a5a7a" transform="rotate(0)"/><rect x="-2" y="-10" width="4" height="5" fill="#4a5a7a" transform="rotate(40)"/><rect x="-2" y="-10" width="4" height="5" fill="#4a5a7a" transform="rotate(80)"/><rect x="-2" y="-10" width="4" height="5" fill="#4a5a7a" transform="rotate(120)"/><rect x="-2" y="-10" width="4" height="5" fill="#4a5a7a" transform="rotate(160)"/><rect x="-2" y="-10" width="4" height="5" fill="#4a5a7a" transform="rotate(200)"/><rect x="-2" y="-10" width="4" height="5" fill="#4a5a7a" transform="rotate(240)"/><rect x="-2" y="-10" width="4" height="5" fill="#4a5a7a" transform="rotate(280)"/><rect x="-2" y="-10" width="4" height="5" fill="#4a5a7a" transform="rotate(320)"/><circle r="3.2" fill="#fff"/></g><g transform="translate(50,5)"><path d="M6 2 a4 4 0 1 1 -1 0z" fill="none" stroke="#777" stroke-width="2"/><rect x="4" y="9" width="3" height="11" fill="#888"/><rect x="7" y="15" width="3" height="2" fill="#888"/><rect x="11" y="5" width="12" height="17" fill="#fff" stroke="#2a6a5a"/><path d="M14 9h7M14 12h7M14 15h7M14 18h7" stroke="#3a6ab8"/><circle cx="11" cy="8" r="1.3" fill="#3a6ad8"/><circle cx="11" cy="12" r="1.3" fill="#3a6ad8"/><circle cx="11" cy="16" r="1.3" fill="#3a6ad8"/><circle cx="11" cy="20" r="1.3" fill="#3a6ad8"/></g><g transform="translate(81,5)"><rect x="0.5" y="0.5" width="23" height="16" rx="1.5" fill="#2c3c6c"/><rect x="2.5" y="2.5" width="19" height="12" fill="url(#scr)"/><rect x="9" y="17" width="6" height="2" fill="#3a4a6a"/><rect x="3" y="19" width="18" height="2" fill="#3a4a6a"/></g><g transform="translate(112,5)"><rect x="0.5" y="0.5" width="22" height="21" rx="1.5" fill="#4a9088" stroke="#2a6a62"/><rect x="2.5" y="2.5" width="18" height="17" fill="#e6eeee"/><rect x="5" y="4" width="6" height="6" fill="#3a7ad0"/><rect x="12" y="4" width="6" height="6" fill="#e8702a"/><rect x="5" y="11" width="6" height="6" fill="#22c8d8"/><rect x="12" y="11" width="6" height="6" fill="#98c828"/></g><g transform="translate(143,5)"><rect x="0.5" y="0.5" width="23" height="21" fill="#fff" stroke="#1a2a6a"/><rect x="4" y="3" width="4" height="2" fill="#1a2a6a"/><rect x="16" y="3" width="4" height="2" fill="#1a2a6a"/><rect x="1" y="7" width="22" height="14" fill="#8aa8d8"/><circle cx="12" cy="14" r="4.5" fill="#f4f4f8" stroke="#5a78b0"/></g><g transform="translate(174,5)"><rect x="5.5" y="0.5" width="13" height="7" fill="#d8dce4" stroke="#6a7080"/><rect x="0.5" y="7.5" width="23" height="9" rx="2" fill="#b8bcc8" stroke="#5a6070"/><rect x="4.5" y="14.5" width="15" height="6" fill="#e8eaee" stroke="#6a7080"/></g></svg><div class="ab" style="left:1090px;top:42px;width:2px;height:30px;background:#fff;border-left:1px solid #7a8498"></div><svg class="ab" style="left:1098px;top:45px" width="54" height="26"><defs><linearGradient id="nb" x1="0" y1="0" x2="0" y2="1"><stop offset="0" stop-color="#a4b8dc"/><stop offset="0.5" stop-color="#8aa2cc"/><stop offset="0.55" stop-color="#7490c0"/><stop offset="1" stop-color="#7a96c6"/></linearGradient><linearGradient id="rb" x1="0" y1="0" x2="0" y2="1"><stop offset="0" stop-color="#f04848"/><stop offset="1" stop-color="#d02828"/></linearGradient></defs><rect x="0.5" y="0.5" width="14" height="10" fill="url(#rb)" stroke="#b02020"/><text x="7.5" y="9.5" font-size="11" text-anchor="middle" fill="#fff" font-family="Liberation Sans" font-weight="bold">1</text><rect x="16.5" y="0.5" width="14" height="10" fill="url(#nb)" stroke="#14306a"/><text x="23.5" y="9.5" font-size="11" text-anchor="middle" fill="#fff" font-family="Liberation Sans" font-weight="normal">2</text><rect x="32.5" y="0.5" width="14" height="10" fill="url(#nb)" stroke="#14306a"/><text x="39.5" y="9.5" font-size="11" text-anchor="middle" fill="#fff" font-family="Liberation Sans" font-weight="normal">3</text><rect x="0.5" y="13.5" width="14" height="10" fill="url(#nb)" stroke="#14306a"/><text x="7.5" y="22.5" font-size="11" text-anchor="middle" fill="#fff" font-family="Liberation Sans" font-weight="normal">4</text><rect x="16.5" y="13.5" width="14" height="10" fill="url(#nb)" stroke="#14306a"/><text x="23.5" y="22.5" font-size="11" text-anchor="middle" fill="#fff" font-family="Liberation Sans" font-weight="normal">5</text><rect x="32.5" y="13.5" width="14" height="10" fill="url(#nb)" stroke="#14306a"/><text x="39.5" y="22.5" font-size="11" text-anchor="middle" fill="#fff" font-family="Liberation Sans" font-weight="normal">6</text></svg><svg class="ab" style="left:0;top:72px" width="170" height="17"><defs><linearGradient id="tg" x1="0" y1="0" x2="0" y2="1"><stop offset="0" stop-color="#a2a2a2"/><stop offset="1" stop-color="#6e6e6e"/></linearGradient></defs><path d="M-1 17 L-1 0.5 L147 0.5 L157.5 17z" fill="url(#tg)" stroke="#111"/></svg><div class="t f" style="left:5px;top:75px;font-size:12px;color:#fff;--w:128px;">[3020] 시뮬레이션 차트</div><svg class="ab" style="left:135px;top:76px" width="12" height="11"><path d="M2 2 L10 10 M10 2 L2 10" stroke="#fff" stroke-width="2.2"/></svg><div class="ab" style="left:1111px;top:75px;width:13px;height:13px;background:#e4e4e4;border:1px solid;border-color:#fff #404040 #404040 #fff"></div><div class="ab" style="left:1126px;top:75px;width:13px;height:13px;background:#e4e4e4;border:1px solid;border-color:#fff #404040 #404040 #fff"></div><div class="ab" style="left:1140px;top:75px;width:13px;height:13px;background:#e4e4e4;border:1px solid;border-color:#fff #404040 #404040 #fff"></div><svg class="ab" style="left:1111px;top:75px" width="41" height="13"><rect x="3" y="9" width="6" height="2" fill="#444"/><rect x="18" y="3" width="7" height="7" fill="none" stroke="#444"/><path d="M31 3 L38 10 M38 3 L31 10" stroke="#000" stroke-width="1.8"/></svg>
<div class="ab" style="left:0px;top:92px;width:8px;height:19px;background:linear-gradient(#fafafa,#e2e2e2 50%,#cfcfcf);border:1px solid #9aa4b4;border-radius:2px"></div><svg class="ab" style="left:1px;top:98px" width="6" height="8"><path d="M5 0v7l-4-3.5z" fill="#333"/></svg><div class="ab" style="left:10px;top:91px;width:1px;height:21px;background:#8c8c8c"></div><div class="ab" style="left:11px;top:91px;width:1px;height:21px;background:#fff"></div><div class="ab" style="left:15px;top:91px;width:79px;height:20px;background:#fff;border:1px solid #8e9cb4"></div><div class="t f" style="left:18px;top:94px;font-size:14px;color:#000;--w:24px">CL,1</div><svg class="ab" style="left:79px;top:99px" width="10" height="6"><path d="M0 0h8l-4 4z" fill="#000"/></svg><div class="ab" style="left:96px;top:91px;width:19px;height:20px;background:linear-gradient(#fafafa,#e2e2e2 50%,#cfcfcf);border:1px solid #9aa4b4;border-radius:2px"></div><svg class="ab" style="left:98px;top:93px" width="16" height="16"><circle cx="6.5" cy="6.5" r="4.3" fill="#f0f0f8" stroke="#333" stroke-width="1.5"/><path d="M9.5 9.5 L14 14" stroke="#222" stroke-width="2.4"/></svg><div class="ab" style="left:118px;top:91px;width:19px;height:20px;background:linear-gradient(#fafafa,#e2e2e2 50%,#cfcfcf);border:1px solid #9aa4b4;border-radius:2px"></div><svg class="ab" style="left:120px;top:93px" width="16" height="16"><circle cx="6.5" cy="6.5" r="4.3" fill="#eee" stroke="#aaa" stroke-width="1.5"/><path d="M9.5 9.5 L14 14" stroke="#aaa" stroke-width="2.4"/></svg><div class="ab" style="left:140px;top:91px;width:1px;height:21px;background:#8c8c8c"></div><div class="ab" style="left:141px;top:91px;width:1px;height:21px;background:#fff"></div><div class="ab" style="left:145px;top:91px;width:19px;height:20px;background:linear-gradient(#fafafa,#e2e2e2 50%,#cfcfcf);border:1px solid #9aa4b4;border-radius:2px"></div><div class="t" style="left:145px;top:95px;width:19px;text-align:center;font-size:13px;color:#000">일</div><div class="ab" style="left:167px;top:91px;width:19px;height:20px;background:linear-gradient(#fafafa,#e2e2e2 50%,#cfcfcf);border:1px solid #9aa4b4;border-radius:2px"></div><div class="t" style="left:167px;top:95px;width:19px;text-align:center;font-size:13px;color:#000">주</div><div class="ab" style="left:190px;top:91px;width:19px;height:20px;background:linear-gradient(#fafafa,#e2e2e2 50%,#cfcfcf);border:1px solid #9aa4b4;border-radius:2px"></div><div class="t" style="left:190px;top:95px;width:19px;text-align:center;font-size:13px;color:#000">월</div><div class="ab" style="left:212px;top:91px;width:19px;height:20px;background:linear-gradient(#fafafa,#e2e2e2 50%,#cfcfcf);border:1px solid #9aa4b4;border-radius:2px"></div><div class="t" style="left:212px;top:95px;width:19px;text-align:center;font-size:13px;color:#000">분</div><div class="ab" style="left:232px;top:91px;width:45px;height:20px;background:#fff;border:1px solid #8e9cb4"></div><div class="t" style="left:236px;top:94px;font-size:14px;color:#000">5</div><svg class="ab" style="left:263px;top:99px" width="10" height="6"><path d="M0 0h8l-4 4z" fill="#000"/></svg><div class="ab" style="left:279px;top:91px;width:20px;height:20px;background:linear-gradient(#ffd8d8,#f4a8a8);border:1px solid #b89898;border-radius:2px"></div><div class="t" style="left:279px;top:95px;width:20px;text-align:center;font-size:13px;color:#000">틱</div><div class="ab" style="left:300px;top:91px;width:55px;height:20px;background:#fff;border:1px solid #8e9cb4"></div><div class="t" style="left:304px;top:94px;font-size:14px;color:#000">1</div><svg class="ab" style="left:342px;top:99px" width="10" height="6"><path d="M0 0h8l-4 4z" fill="#000"/></svg><div class="ab" style="left:358px;top:91px;width:1px;height:21px;background:#8c8c8c"></div><div class="ab" style="left:359px;top:91px;width:1px;height:21px;background:#fff"></div><div class="ab" style="left:363px;top:91px;width:49px;height:20px;background:#fff;border:1px solid #8e9cb4"></div><div class="t f" style="left:366px;top:94px;font-size:14px;color:#000;--w:24px">날짜</div><svg class="ab" style="left:400px;top:99px" width="10" height="6"><path d="M0 0h8l-4 4z" fill="#000"/></svg><div class="ab" style="left:414px;top:91px;width:85px;height:20px;background:#fff;border:1px solid #8e9cb4"></div><div class="t f" style="left:417px;top:94px;font-size:14px;color:#000;--w:60px">2016-04-07</div><svg class="ab" style="left:486px;top:99px" width="10" height="6"><path d="M0 0h8l-4 4z" fill="#000"/></svg><div class="t" style="left:501px;top:94px;font-size:12px;color:#000">~</div><div class="ab" style="left:511px;top:91px;width:85px;height:20px;background:#fff;border:1px solid #8e9cb4"></div><div class="t f" style="left:514px;top:94px;font-size:14px;color:#000;--w:60px">2016-04-09</div><svg class="ab" style="left:583px;top:99px" width="10" height="6"><path d="M0 0h8l-4 4z" fill="#000"/></svg><div class="ab" style="left:599px;top:91px;width:1px;height:21px;background:#8c8c8c"></div><div class="ab" style="left:600px;top:91px;width:1px;height:21px;background:#fff"></div><div class="ab" style="left:604px;top:91px;width:20px;height:20px;background:linear-gradient(#fafafa,#e2e2e2 50%,#cfcfcf);border:1px solid #9aa4b4;border-radius:2px"></div><svg class="ab" style="left:604px;top:91px" width="20" height="20"><path d="M2 9 L7 13 L11 8 L17 11" stroke="#e00" stroke-width="2" fill="none"/><path d="M2 12 L8 9 L17 13" stroke="#222" stroke-width="1.5" fill="none"/></svg><div class="ab" style="left:627px;top:91px;width:20px;height:20px;background:linear-gradient(#fafafa,#e2e2e2 50%,#cfcfcf);border:1px solid #9aa4b4;border-radius:2px"></div><svg class="ab" style="left:627px;top:91px" width="20" height="20"><path d="M4 6v10M8 3v13M12 5v9" stroke="#222" stroke-width="2"/><path d="M15 4v4M15 12v2" stroke="#e00" stroke-width="2"/><rect x="6" y="14" width="2" height="2" fill="#e00"/></svg><div class="ab" style="left:648px;top:91px;width:20px;height:20px;background:linear-gradient(#fafafa,#e2e2e2 50%,#cfcfcf);border:1px solid #9aa4b4;border-radius:2px"></div><svg class="ab" style="left:648px;top:91px" width="20" height="20"><path d="M4 10v7M8 7v10M12 5v12M16 3v14" stroke="#333" stroke-width="2"/></svg><div class="ab" style="left:671px;top:91px;width:20px;height:20px;background:linear-gradient(#fafafa,#e2e2e2 50%,#cfcfcf);border:1px solid #9aa4b4;border-radius:2px"></div><svg class="ab" style="left:671px;top:91px" width="20" height="20"><path d="M6 3 L2 8h3v9h2v-9h3z" fill="#222"/><path d="M13 17 L9 12h3v-9h2v9h3z" fill="#fff" stroke="#333"/></svg><div class="ab" style="left:698px;top:91px;width:20px;height:20px;background:linear-gradient(#fafafa,#e2e2e2 50%,#cfcfcf);border:1px solid #9aa4b4;border-radius:2px"></div><svg class="ab" style="left:698px;top:91px" width="20" height="20"><path d="M3 2h8l4 4v11h-12z" fill="#fff" stroke="#333"/><path d="M10 10h4a3 3 0 0 1 0 6h-4z" fill="#fff" stroke="#333" stroke-width="1.5"/></svg><div class="ab" style="left:720px;top:91px;width:20px;height:20px;background:linear-gradient(#fafafa,#e2e2e2 50%,#cfcfcf);border:1px solid #9aa4b4;border-radius:2px"></div><svg class="ab" style="left:720px;top:91px" width="20" height="20"><rect x="3" y="7" width="14" height="10" fill="#ddd" stroke="#333"/><path d="M6 2 L10 7 L14 2" stroke="#333" fill="none"/><text x="10" y="17" font-size="9" font-weight="bold" font-family="Liberation Sans" fill="#222">R</text></svg><div class="ab" style="left:743px;top:91px;width:20px;height:20px;background:linear-gradient(#fafafa,#e2e2e2 50%,#cfcfcf);border:1px solid #9aa4b4;border-radius:2px"></div><svg class="ab" style="left:743px;top:91px" width="20" height="20"><rect x="2" y="5" width="11" height="12" fill="#fff" stroke="#333"/><text x="11" y="11" font-size="10" font-weight="bold" font-family="Liberation Sans" fill="#e00">R</text><circle cx="7" cy="12" r="3" fill="none" stroke="#333"/></svg><div class="ab" style="left:765px;top:91px;width:20px;height:20px;background:linear-gradient(#fafafa,#e2e2e2 50%,#cfcfcf);border:1px solid #9aa4b4;border-radius:2px"></div><svg class="ab" style="left:765px;top:91px" width="20" height="20"><rect x="2" y="6" width="10" height="11" fill="#fff" stroke="#333"/><rect x="5" y="3" width="10" height="11" fill="#fff" stroke="#333"/><text x="11" y="11" font-size="10" font-weight="bold" font-family="Liberation Sans" fill="#e00">R</text></svg><div class="ab" style="left:793px;top:91px;width:20px;height:20px;background:linear-gradient(#fafafa,#e2e2e2 50%,#cfcfcf);border:1px solid #9aa4b4;border-radius:2px"></div><svg class="ab" style="left:793px;top:91px" width="20" height="20"><rect x="3" y="3" width="14" height="14" fill="#fff" stroke="#333" stroke-width="1.5"/><rect x="6" y="3" width="8" height="5" fill="#888"/><rect x="6" y="11" width="8" height="6" fill="#fff" stroke="#333"/></svg><div class="ab" style="left:815px;top:91px;width:20px;height:20px;background:linear-gradient(#fafafa,#e2e2e2 50%,#cfcfcf);border:1px solid #9aa4b4;border-radius:2px"></div><svg class="ab" style="left:815px;top:91px" width="20" height="20"><path d="M2 8h6l2 2h7l-3 7h-12z" fill="#f8c030" stroke="#a07010"/><path d="M9 9 L15 4 M12 3h4v4" stroke="#e03000" stroke-width="2" fill="none"/></svg><div class="ab" style="left:693px;top:91px;width:1px;height:21px;background:#8c8c8c"></div><div class="ab" style="left:694px;top:91px;width:1px;height:21px;background:#fff"></div><div class="ab" style="left:787px;top:91px;width:1px;height:21px;background:#8c8c8c"></div><div class="ab" style="left:788px;top:91px;width:1px;height:21px;background:#fff"></div>
<div class="t f" style="left:-2px;top:115px;font-size:13px;color:#e00000;--w:726px;letter-spacing:0.6px">연결_Light Sweet Crude Oil 2016,05 s_기간절대값_차이(가격-거래량) 누적 시스템(5,1,1000,1000,1000)_수익 2016/04/07 10:25:37 0,00</div><div class="t f" style="left:-2px;top:274px;font-size:13px;color:#000;--w:338px;letter-spacing:0.6px">연결_Light Sweet Crude Oil 2016,05(1틱) 2016/04/07 10:25:37</div><div class="t f" style="left:348px;top:274px;font-size:13px;color:#000;--w:43px;">종 36,87</div><div class="t f" style="left:404px;top:274px;font-size:13px;color:#000;--w:43px;">시 36,87</div><div class="t f" style="left:452px;top:274px;font-size:13px;color:#000;--w:42px;">고 36,87</div><div class="t f" style="left:500px;top:274px;font-size:13px;color:#000;--w:43px;">저 36,87</div><div class="t f" style="left:0px;top:594px;font-size:13px;color:#000;--w:330px;letter-spacing:0.5px">s_기간절대값_차이(거래량-가격)_누적2&nbsp;&nbsp;(5,1,1000,1000,1000)</div><div class="t f" style="left:335px;top:594px;font-size:13px;color:#000;--w:108px;letter-spacing:0.5px">2016/04/07 10:25:37</div><div class="t f" style="left:447px;top:594px;font-size:13px;color:#000080;--w:34px;">307,84</div><div class="t f" style="left:316px;top:296px;font-size:13px;color:#e00000;--w:118px;letter-spacing:0.5px">37,08 (04/07 10:38:04)</div><svg class="ab" style="left:294px;top:300px" width="18" height="8"><path d="M1 4.5h15M1 4.5l4 -3" stroke="#e00000" fill="none"/></svg><div class="t f" style="left:285px;top:290px;font-size:13px;color:#000;--w:10px;">-3</div><div class="t f" style="left:10px;top:489px;font-size:13px;color:#000;--w:10px;">-1</div><div class="t f" style="left:896px;top:409px;font-size:13px;color:#000;--w:9px;">-1</div><div class="t f" style="left:78px;top:571px;font-size:13px;color:#0000c8;--w:118px;letter-spacing:0.5px">36,81 (04/07 10:29:15)</div><svg class="ab" style="left:56px;top:573px" width="20" height="9"><path d="M1 4.5h17M1 4.5l5 3.5" stroke="#0000c8" fill="none"/></svg><div class="t f" style="left:671px;top:546px;font-size:13px;color:#000;--w:8px;">0</div><div class="t f" style="left:955px;top:285px;font-size:13px;color:#e00000;--w:53px;letter-spacing:0.5px">H: -0,59%</div><div class="t f" style="left:1018px;top:285px;font-size:13px;color:#0000c8;--w:46px;letter-spacing:0.5px">L: 0,14%</div><div class="t f" style="left:0px;top:614px;font-size:13px;color:#e00000;--w:33px;">500,00</div><div class="t f" style="left:0px;top:738px;font-size:13px;color:#e00000;--w:38px;">-500,00</div><div class="t f" style="left:1077px;top:192px;font-size:13px;color:#000;--w:22px;letter-spacing:0.5px">0,00</div><div class="t f" style="left:1077px;top:281px;font-size:13px;color:#000;--w:28px;letter-spacing:0.5px">37,10</div><div class="t f" style="left:1077px;top:380px;font-size:13px;color:#000;--w:28px;letter-spacing:0.5px">37,00</div><div class="t f" style="left:1077px;top:479px;font-size:13px;color:#000;--w:28px;letter-spacing:0.5px">36,90</div><div class="t f" style="left:1077px;top:578px;font-size:13px;color:#000;--w:28px;letter-spacing:0.5px">36,80</div><div class="t f" style="left:1077px;top:620px;font-size:13px;color:#000;--w:33px;letter-spacing:0.5px">500,00</div><div class="t f" style="left:1077px;top:683px;font-size:13px;color:#000;--w:22px;letter-spacing:0.5px">0,00</div><div class="ab" style="left:1069px;top:741px;width:58px;height:13px;overflow:hidden"><div class="t f" style="left:9px;top:3px;font-size:13px;--w:39px;letter-spacing:0.5px">-500,00</div></div><div class="t f" style="left:680px;top:759px;font-size:13px;color:#000;--w:29px;letter-spacing:0.5px">11:00</div><div class="t f" style="left:1090px;top:759px;font-size:13px;color:#000;--w:30px;letter-spacing:0.5px">11:20</div><div class="ab" style="left:694px;top:755px;width:1px;height:4px;background:#000"></div><div class="ab" style="left:1047px;top:115px;width:9px;height:9px;border:1px solid #808080;background:#fff"></div><div class="ab" style="left:1049px;top:119px;width:5px;height:1px;background:#000"></div><div class="ab" style="left:1057px;top:115px;width:9px;height:9px;border:1px solid #808080;background:#fff"></div><svg class="ab" style="left:1057px;top:115px" width="9" height="9"><path d="M2 2L7 7M7 2L2 7" stroke="#000" stroke-width="1.2"/></svg><div class="ab" style="left:1057px;top:274px;width:9px;height:9px;border:1px solid #808080;background:#fff"></div><div class="ab" style="left:1059px;top:276px;width:5px;height:5px;border:1px solid #000"></div><div class="ab" style="left:1047px;top:594px;width:9px;height:9px;border:1px solid #808080;background:#fff"></div><div class="ab" style="left:1049px;top:598px;width:5px;height:1px;background:#000"></div><div class="ab" style="left:1057px;top:594px;width:9px;height:9px;border:1px solid #808080;background:#fff"></div><svg class="ab" style="left:1057px;top:594px" width="9" height="9"><path d="M2 2L7 7M7 2L2 7" stroke="#000" stroke-width="1.2"/></svg><svg class="ab" style="left:0;top:0" width="1152" height="840" shape-rendering="crispEdges"><polygon points="13,792 13,783 100,784 200,785 300,786 400,787 460,789 500,787 560,785 640,783 700,781 760,780 820,779 860,778 915,777 915,792" fill="#525252"/><rect x="13" y="789" width="902" height="3" fill="#474747"/><rect x="339" y="776" width="34" height="13" fill="#666"/><rect x="335" y="776" width="5" height="14" fill="#fff"/><rect x="336" y="777" width="3" height="12" fill="#000"/><rect x="373" y="776" width="5" height="14" fill="#fff"/><rect x="374" y="777" width="3" height="12" fill="#000"/></svg><div class="ab" style="left:0;top:776px;width:13px;height:16px;background:#d8d8d8"></div><svg class="ab" style="left:3px;top:780px" width="6" height="9"><path d="M5 0v8l-4-4z" fill="#000"/></svg><div class="ab" style="left:915px;top:776px;width:212px;height:16px;background:#d4d4d4"></div><svg class="ab" style="left:915px;top:776px" width="212" height="16"><rect x="0.5" y="0.5" width="13" height="15" fill="#e0e0e0" stroke="#aaa"/><path d="M5 4v8l4-4z" fill="#000"/><rect x="14.5" y="0.5" width="17" height="15" fill="#e0e0e0" stroke="#aaa"/><path d="M23 4v8l-4-4zM28 4v8l-4-4z" fill="#000"/><rect x="32.5" y="0.5" width="17" height="15" fill="#e0e0e0" stroke="#aaa"/><path d="M36 4v8l4-4zM41 4v8l4-4z" fill="#000"/><rect x="51.5" y="1.5" width="52" height="14" fill="#fff" stroke="#666"/><path d="M106 8l6-6v12zM113 2l6 6l-6 6z" fill="#000"/><path d="M125 2l6 6l-6 6zM137 2l-6 6l6 6z" fill="#000"/><circle cx="149" cy="8" r="5.5" fill="#fff" stroke="#000" stroke-width="1.5"/><path d="M146 8h6M149 5v6" stroke="#000" stroke-width="1.5"/><circle cx="167.5" cy="8" r="5.5" fill="none" stroke="#bbb" stroke-width="1.5"/><path d="M164 8h7" stroke="#bbb" stroke-width="1.5"/><rect x="179.5" y="2.5" width="11" height="11" fill="none" stroke="#aaa"/><path d="M185 2v12M179 8h12" stroke="#aaa"/><rect x="197.5" y="2.5" width="11" height="11" fill="#fff" stroke="#000" stroke-width="1.2"/><path d="M198 3l10 10M208 3l-10 10" stroke="#000"/></svg><div class="t f" style="left:986px;top:777px;font-size:13px;color:#000;--w:31px;">11089</div><div class="ab" style="left:1069px;top:758px;width:15px;height:15px;border:1px solid #555;background:#eee;border-color:#fff #333 #333 #fff"></div><svg class="ab" style="left:1070px;top:759px" width="13" height="13"><circle cx="5.5" cy="5.5" r="3" fill="#fff" stroke="#000" stroke-width="1.6"/><path d="M8 8l3 3" stroke="#000" stroke-width="2"/></svg><div class="ab" style="left:13px;top:789px;width:902px;height:3px;background:#474747"></div><div class="ab" style="left:2px;top:797px;width:2px;height:15px;background:#ccc"></div><div class="ab" style="left:5px;top:797px;width:2px;height:15px;background:#ccc"></div><div class="ab" style="left:13px;top:796px;width:94px;height:20px;background:#666;border:1px solid #000;border-bottom:none;box-shadow:inset 1px 1px 0 #bbb,inset -1px 0 0 #bbb"></div><div class="t" style="left:19px;top:800px;font-size:12px;color:#e0e0e0">시뮬레이</div><svg class="ab" style="left:94px;top:802px" width="10" height="9"><path d="M2 1l6 6M8 1l-6 6" stroke="#ddd" stroke-width="1.5"/></svg><svg class="ab" style="left:1098px;top:796px" width="54" height="18"><rect x="2.5" y="1.5" width="10" height="11" fill="#bbb" stroke="#444"/><rect x="4.5" y="3.5" width="10" height="11" fill="#e4e0d8" stroke="#444"/><path d="M7 6.5h2M10 6.5h3M7 8.5h2M10 8.5h3M7 10.5h2M10 10.5h3" stroke="#335"/><rect x="20.5" y="2.5" width="11" height="12" fill="#e4e0d8" stroke="#111" stroke-width="1.3"/><path d="M23 5.5h6M23 7.5h6M23 9.5h6M23 11.5h6" stroke="#111"/><path d="M38 4l8 8M46 4l-8 8" stroke="#fff" stroke-width="2.4"/></svg><div class="ab" style="left:0;top:816px;width:14px;height:20px;background:#666"></div><div class="ab" style="left:2px;top:819px;width:2px;height:15px;background:#ccc"></div><div class="ab" style="left:5px;top:819px;width:2px;height:15px;background:#ccc"></div><div class="ab" style="left:14px;top:818px;width:65px;height:17px;background:#363636"></div><div class="ab" style="left:543px;top:818px;width:65px;height:17px;background:#363636"></div><div class="ab" style="left:529px;top:819px;width:12px;height:15px;background:#f4f4f4;border:1px solid #aaa"></div><svg class="ab" style="left:531px;top:824px" width="9" height="6"><path d="M1 1h7l-3.5 4z" fill="#888"/></svg><div class="ab" style="left:1058px;top:819px;width:12px;height:15px;background:#f4f4f4;border:1px solid #aaa"></div><svg class="ab" style="left:1060px;top:824px" width="9" height="6"><path d="M1 1h7l-3.5 4z" fill="#888"/></svg><div class="ab" style="left:1071px;top:816px;width:81px;height:20px;background:#5a5a5a"></div><div class="ab" style="left:1074px;top:818px;width:24px;height:18px;background:#6e6e6e;border:1px solid #9a9a9a"></div><div class="ab" style="left:1100px;top:818px;width:24px;height:18px;background:#6e6e6e;border:1px solid #9a9a9a"></div><div class="ab" style="left:1126px;top:818px;width:24px;height:18px;background:#6e6e6e;border:1px solid #9a9a9a"></div><svg class="ab" style="left:1074px;top:818px" width="78" height="18"><g transform="translate(12,9)" fill="#eee"><circle r="4"/><rect x="-1.2" y="-6.5" width="2.4" height="3" transform="rotate(0)"/><rect x="-1.2" y="-6.5" width="2.4" height="3" transform="rotate(45)"/><rect x="-1.2" y="-6.5" width="2.4" height="3" transform="rotate(90)"/><rect x="-1.2" y="-6.5" width="2.4" height="3" transform="rotate(135)"/><rect x="-1.2" y="-6.5" width="2.4" height="3" transform="rotate(180)"/><rect x="-1.2" y="-6.5" width="2.4" height="3" transform="rotate(225)"/><rect x="-1.2" y="-6.5" width="2.4" height="3" transform="rotate(270)"/><rect x="-1.2" y="-6.5" width="2.4" height="3" transform="rotate(315)"/><circle r="1.8" fill="#6e6e6e"/></g><rect x="33.5" y="3.5" width="9" height="11" fill="none" stroke="#eee"/><path d="M35 5.5h6M35 7.5h6M35 9.5h6M35 11.5h6" stroke="#eee"/><path d="M57 14v-9h-3l4-4 4 4h-3v7h10M71 4v9h3l-4 4-4-4h3v-7h-10" fill="none" stroke="#eee" stroke-width="1.4"/></svg>
<svg class="ab" style="left:1128px;top:90px" width="24" height="702"><rect x="3.5" y="3.5" width="17" height="17" fill="#dedbd4" stroke="#7a7a7a"/><path d="M4.5 19.5V4.5H19.5" stroke="#fff" fill="none"/><g transform="translate(4,4)"><path d="M1 16L16 1V16z" fill="#b0b0b0"/><path d="M10 3C6 2 4 5 5 8H3l3 3 3-3H7C6 6 8 4 10 5z" fill="#0000c8"/><path d="M7 14C11 15 13 12 12 9h2l-3-3-3 3h2c1 2-1 4-3 3z" fill="#0000c8"/></g><rect x="3.5" y="28.5" width="17" height="17" fill="#dedbd4" stroke="#7a7a7a"/><path d="M4.5 44.5V29.5H19.5" stroke="#fff" fill="none"/><g transform="translate(4,29)"><rect x="2" y="2" width="4" height="13" rx="1.5" fill="#fff" stroke="#0000c8" stroke-width="1.4"/><rect x="11" y="2" width="4" height="13" rx="1.5" fill="#fff" stroke="#0000c8" stroke-width="1.4"/><path d="M6 8.5h5" stroke="#e00000" stroke-width="2.5"/><rect x="3.5" y="4" width="1" height="1" fill="#e00000"/><rect x="12.5" y="4" width="1" height="1" fill="#e00000"/><rect x="3.5" y="10" width="1" height="3" fill="#e00000"/><rect x="12.5" y="10" width="1" height="3" fill="#e00000"/></g><rect x="0.5" y="50.5" width="23" height="23" fill="#e8e8e8" stroke="#999" stroke-dasharray="1,1"/><rect x="3.5" y="53.5" width="17" height="17" fill="#ecebe8" stroke="#555"/><g transform="translate(4,54)"><path d="M4 2v12l3-3 2.5 5 2-1-2.5-5h4z" fill="#00007a"/></g><rect x="3.5" y="78.5" width="17" height="17" fill="#dedbd4" stroke="#7a7a7a"/><path d="M4.5 94.5V79.5H19.5" stroke="#fff" fill="none"/><g transform="translate(4,79)"><path d="M3 3h5M3 3v4h5v4M14 5L4 14M10 10h4v3h-4z" stroke="#909090" fill="none" stroke-width="1.3"/></g><rect x="3.5" y="103.5" width="17" height="17" fill="#dedbd4" stroke="#7a7a7a"/><path d="M4.5 119.5V104.5H19.5" stroke="#fff" fill="none"/><g transform="translate(4,104)"><path d="M2 5l2 3 5-6" stroke="#e00000" fill="none" stroke-width="1.6"/><path d="M5 10l5-4 5 3-5 5z" fill="#fff" stroke="#0000c8" stroke-width="1.3"/></g><rect x="3.5" y="128.5" width="17" height="17" fill="#dedbd4" stroke="#7a7a7a"/><path d="M4.5 144.5V129.5H19.5" stroke="#fff" fill="none"/><g transform="translate(4,129)"><path d="M2 7V2h3v5M2 4h3M7 2v5h2M10 2v5h2" stroke="#e00000" fill="none" stroke-width="1.1"/><path d="M4 12l6-4 5 3-6 4z" fill="#fff" stroke="#0000c8" stroke-width="1.3"/></g><rect x="3.5" y="153.5" width="17" height="17" fill="#c8c8c8" stroke="#666" stroke-width="1.5"/><g transform="translate(4,154)"><path d="M3 14V4l5 8V4l5 8" stroke="#808080" fill="none" stroke-width="1.3"/></g><rect x="3.5" y="178.5" width="17" height="17" fill="#dedbd4" stroke="#7a7a7a"/><path d="M4.5 194.5V179.5H19.5" stroke="#fff" fill="none"/><g transform="translate(4,179)"><path d="M3 8.5h11" stroke="#e00000" stroke-width="1.5"/><rect x="2" y="7" width="3" height="3" fill="#e00000"/><rect x="12" y="7" width="3" height="3" fill="#e00000"/></g><rect x="3.5" y="203.5" width="17" height="17" fill="#dedbd4" stroke="#7a7a7a"/><path d="M4.5 219.5V204.5H19.5" stroke="#fff" fill="none"/><g transform="translate(4,204)"><path d="M8.5 3v11" stroke="#0000c8" stroke-width="1.5"/><rect x="7" y="2" width="3" height="3" fill="#e00000"/><rect x="7" y="12" width="3" height="3" fill="#e00000"/></g><rect x="3.5" y="228.5" width="17" height="17" fill="#dedbd4" stroke="#7a7a7a"/><path d="M4.5 244.5V229.5H19.5" stroke="#fff" fill="none"/><g transform="translate(4,229)"><path d="M4 8v6h9V8" stroke="#0000c8" fill="none" stroke-width="1.6"/><rect x="3" y="9" width="3" height="3" fill="#0000c8"/><path d="M12 3v6" stroke="#e00000" stroke-width="1.5"/><rect x="11" y="2" width="3" height="3" fill="#e00000"/></g><rect x="3.5" y="253.5" width="17" height="17" fill="#dedbd4" stroke="#7a7a7a"/><path d="M4.5 269.5V254.5H19.5" stroke="#fff" fill="none"/><g transform="translate(4,254)"><path d="M4 13L13 4" stroke="#0000c8" stroke-width="1.4"/><rect x="2" y="12" width="3" height="3" fill="#e00000"/><rect x="12" y="2" width="3" height="3" fill="#e00000"/></g><rect x="3.5" y="278.5" width="17" height="17" fill="#dedbd4" stroke="#7a7a7a"/><path d="M4.5 294.5V279.5H19.5" stroke="#fff" fill="none"/><g transform="translate(4,279)"><path d="M2 8V3h4v5M2 5h4M9 10h6M12 10v6" stroke="#e00000" fill="none" stroke-width="1.3"/><path d="M3 15L15 3" stroke="#0000c8" stroke-width="1.3"/></g><rect x="3.5" y="303.5" width="17" height="17" fill="#dedbd4" stroke="#7a7a7a"/><path d="M4.5 319.5V304.5H19.5" stroke="#fff" fill="none"/><g transform="translate(4,304)"><path d="M2 3h13M2 6h13M2 9h13M2 12h13M2 15h13" stroke="#0000c8" stroke-width="1.2"/><path d="M2 3h6" stroke="#e00000" stroke-width="1.2"/></g><rect x="3.5" y="328.5" width="17" height="17" fill="#dedbd4" stroke="#7a7a7a"/><path d="M4.5 344.5V329.5H19.5" stroke="#fff" fill="none"/><g transform="translate(4,329)"><path d="M3 7l3-5M8 2v5h4" stroke="#e00000" fill="none" stroke-width="1.2"/><path d="M3 10v6M6 10v6M9 10v6M12 10v6M15 10v6" stroke="#0000c8" stroke-width="1.2"/></g><rect x="3.5" y="353.5" width="17" height="17" fill="#dedbd4" stroke="#7a7a7a"/><path d="M4.5 369.5V354.5H19.5" stroke="#fff" fill="none"/><g transform="translate(4,354)"><path d="M2 7l3-5M9 2l-2 5h5" stroke="#e00000" fill="none" stroke-width="1.2"/><path d="M2 15C6 9 10 9 15 14M2 15C7 12 11 12 15 11M4 15L14 7" stroke="#0000c8" fill="none" stroke-width="1.2"/></g><rect x="3.5" y="378.5" width="17" height="17" fill="#dedbd4" stroke="#7a7a7a"/><path d="M4.5 394.5V379.5H19.5" stroke="#fff" fill="none"/><g transform="translate(4,379)"><path d="M4 6l3-4M10 2a2 2 0 1 0 3 3" stroke="#e00000" fill="none" stroke-width="1.2"/><path d="M3 15C5 8 11 8 14 15M2 12L9 5L15 12" stroke="#0000c8" fill="none" stroke-width="1.3"/></g><rect x="3.5" y="403.5" width="17" height="17" fill="#dedbd4" stroke="#7a7a7a"/><path d="M4.5 419.5V404.5H19.5" stroke="#fff" fill="none"/><g transform="translate(4,404)"><path d="M3 8l3-6M9 8V2h3v3h-3l3 3" stroke="#e00000" fill="none" stroke-width="1.2"/><path d="M2 10h13M2 12.5h13M2 15h13" stroke="#0000c8" stroke-width="1.2"/></g><rect x="3.5" y="428.5" width="17" height="17" fill="#dedbd4" stroke="#7a7a7a"/><path d="M4.5 444.5V429.5H19.5" stroke="#fff" fill="none"/><g transform="translate(4,429)"><path d="M3 11L12 2M5 15L15 5" stroke="#0000c8" stroke-width="1.2"/></g><rect x="3.5" y="453.5" width="17" height="17" fill="#dedbd4" stroke="#7a7a7a"/><path d="M4.5 469.5V454.5H19.5" stroke="#fff" fill="none"/><g transform="translate(4,454)"><path d="M3 8V2h4M3 5h3M3 8h4" stroke="#e00000" fill="none" stroke-width="1.2"/><path d="M3 14l4-4 3 3 5-5" stroke="#0000c8" fill="none" stroke-width="1.3"/><rect x="2" y="13" width="2" height="2" fill="#e00000"/><rect x="9" y="12" width="2" height="2" fill="#e00000"/></g><rect x="3.5" y="478.5" width="17" height="17" fill="#dedbd4" stroke="#7a7a7a"/><path d="M4.5 494.5V479.5H19.5" stroke="#fff" fill="none"/><g transform="translate(4,479)"><path d="M3 8V2h4M3 5h3M3 8h4" stroke="#e00000" fill="none" stroke-width="1.2"/><path d="M3 14l4-4 3 3 5-5" stroke="#0000c8" fill="none" stroke-width="1.3"/><rect x="2" y="13" width="2" height="2" fill="#e00000"/><rect x="6" y="9" width="2" height="2" fill="#e00000"/></g><rect x="3.5" y="503.5" width="17" height="17" fill="#dedbd4" stroke="#7a7a7a"/><path d="M4.5 519.5V504.5H19.5" stroke="#fff" fill="none"/><g transform="translate(4,504)"><path d="M3 2v6h4" stroke="#e00000" fill="none" stroke-width="1.2"/><path d="M4 15L14 5M8 15l7-7M2 13l6-6" stroke="#0000c8" stroke-width="1.2"/><path d="M10 6v10M13 4v10" stroke="#e00000" stroke-width="1.1"/></g><rect x="3.5" y="528.5" width="17" height="17" fill="#dedbd4" stroke="#7a7a7a"/><path d="M4.5 544.5V529.5H19.5" stroke="#fff" fill="none"/><g transform="translate(4,529)"><path d="M3 2v5h2a2.5 2.5 0 0 0 0-5z" stroke="#e00000" fill="none" stroke-width="1.1"/><path d="M2 14L12 4M5 16L15 6M2 10L9 3" stroke="#0000c8" stroke-width="1.2"/><path d="M6 8v8M9 6v10M12 4v10" stroke="#0000c8" stroke-width="1.1"/></g><rect x="3.5" y="553.5" width="17" height="17" fill="#dedbd4" stroke="#7a7a7a"/><path d="M4.5 569.5V554.5H19.5" stroke="#fff" fill="none"/><g transform="translate(4,554)"><path d="M3 7V2h4M3 4.5h3M3 7h4" stroke="#e00000" fill="none" stroke-width="1.1"/><path d="M2 14L12 4M5 16L15 6" stroke="#0000c8" stroke-width="1.2"/><path d="M6 8v8M9 6v10M12 4v10" stroke="#e00000" stroke-width="1.1"/></g><rect x="3.5" y="578.5" width="17" height="17" fill="#dedbd4" stroke="#7a7a7a"/><path d="M4.5 594.5V579.5H19.5" stroke="#fff" fill="none"/><g transform="translate(4,579)"><path d="M3 8V2h3v3H3l3 3" stroke="#e00000" fill="none" stroke-width="1.1"/><path d="M2 14L12 4M5 16L15 6" stroke="#0000c8" stroke-width="1.2"/><path d="M6 8v8M9 6v10M12 4v10" stroke="#0000c8" stroke-width="1.1"/></g><rect x="3.5" y="603.5" width="17" height="17" fill="#dedbd4" stroke="#7a7a7a"/><path d="M4.5 619.5V604.5H19.5" stroke="#fff" fill="none"/><g transform="translate(4,604)"><rect x="2.5" y="4.5" width="5" height="6" fill="none" stroke="#e00000" stroke-width="1.3"/><path d="M6 10l2 2M9 6h6M9 9h6" stroke="#e00000" stroke-width="1.2"/><path d="M2 14h13M2 3h13" stroke="#0000c8" stroke-width="1.2"/></g><rect x="3.5" y="628.5" width="17" height="17" fill="#dedbd4" stroke="#7a7a7a"/><path d="M4.5 644.5V629.5H19.5" stroke="#fff" fill="none"/><g transform="translate(4,629)"><path d="M3 3h11v3M3 3v3M8.5 3v11M6 14h5" stroke="#0000c8" fill="none" stroke-width="2"/></g><rect x="3.5" y="653.5" width="17" height="17" fill="#dedbd4" stroke="#7a7a7a"/><path d="M4.5 669.5V654.5H19.5" stroke="#fff" fill="none"/><g transform="translate(4,654)"><path d="M8.5 2L2 9h4v6h5V9h4z" fill="#0000c8"/></g><rect x="3.5" y="678.5" width="17" height="17" fill="#dedbd4" stroke="#7a7a7a"/><path d="M4.5 694.5V679.5H19.5" stroke="#fff" fill="none"/><g transform="translate(4,679)"><path d="M8.5 15L2 8h4V2h5v6h4z" fill="#0000c8"/></g><rect x="0" y="690" width="24" height="12" fill="#d6d6d6"/><path d="M19 693l3 3 3-3M19 697l3 3 3-3" stroke="#000" fill="none" stroke-width="1.3"/></svg>
<svg width="1152" height="840" style="position:absolute;left:0;top:0" shape-rendering="crispEdges"><rect x="166.5" y="378.5" width="72" height="86" fill="none" stroke="#ffcc00" stroke-width="3"/><rect x="975.5" y="100.5" width="53" height="504" fill="none" stroke="#ffcc00" stroke-width="3"/></svg>
<script>document.querySelectorAll('.f').forEach(function(e){var w=parseFloat(e.style.getPropertyValue('--w'));var r=e.getBoundingClientRect().width;if(r>0&&w>0){e.style.transformOrigin='0 0';e.style.transform='scaleX('+(w/r)+')';}});</script>
</body></html>
